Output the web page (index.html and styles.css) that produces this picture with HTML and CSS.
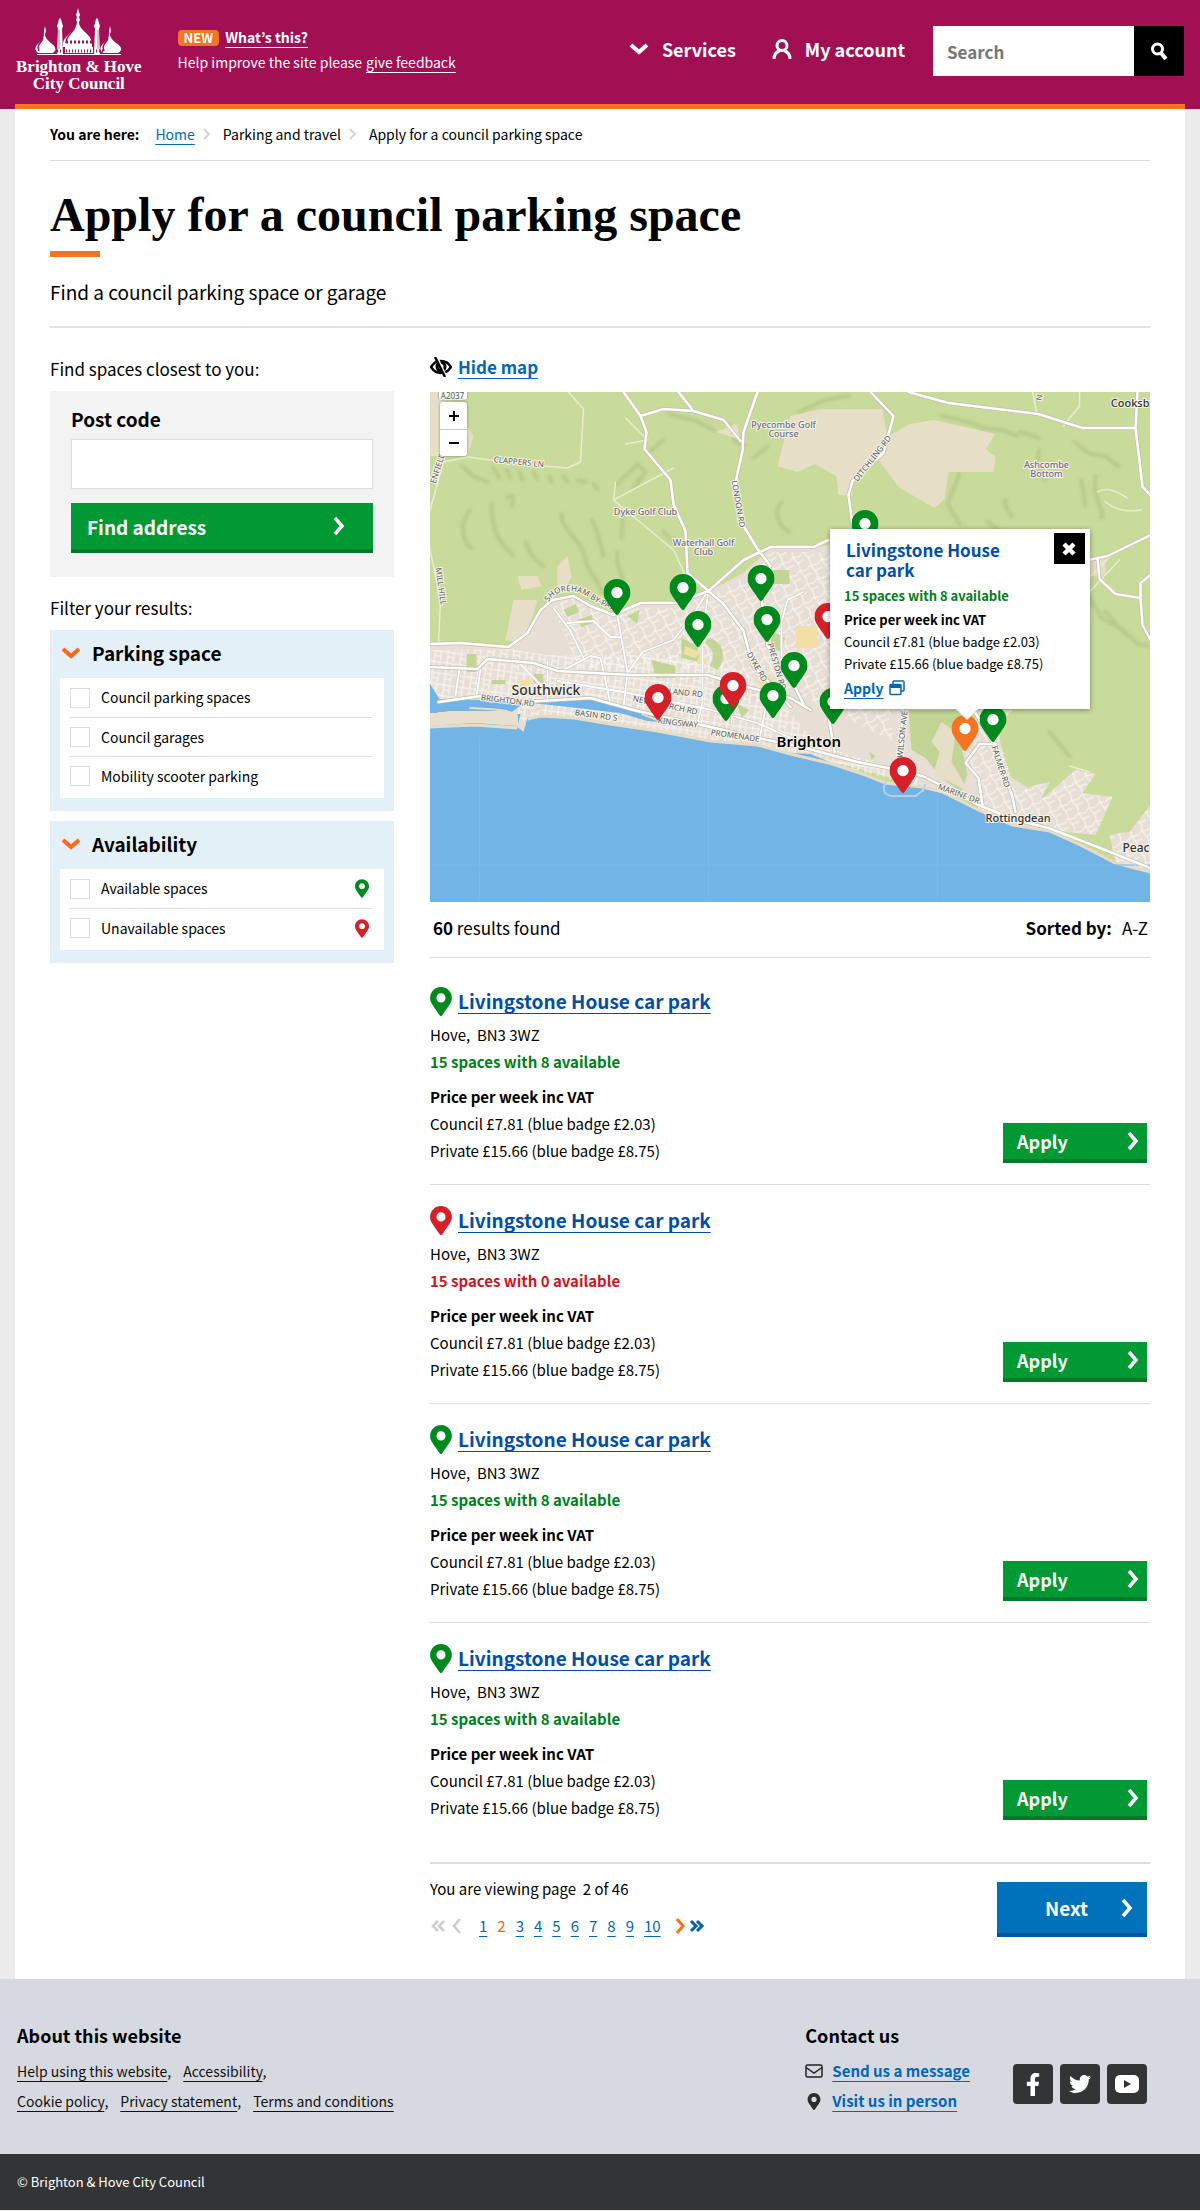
FILE: index.html
```html
<!DOCTYPE html>
<html lang="en">
<head>
<meta charset="utf-8">
<meta name="viewport" content="width=device-width, initial-scale=1">
<title>Apply for a council parking space</title>
<link rel="stylesheet" href="styles.css">
</head>
<body>
<svg class="sprite" aria-hidden="true">
  <symbol id="pin" viewBox="0 0 384 512"><circle cx="192" cy="192" r="100" fill="#fff"/><path fill="currentColor" d="M172.268 501.67C26.97 291.031 0 269.413 0 192 0 85.961 85.961 0 192 0s192 85.961 192 192c0 77.413-26.97 99.031-172.268 309.67-9.535 13.774-29.93 13.773-39.464 0zM192 272c44.183 0 80-35.817 80-80s-35.817-80-80-80-80 35.817-80 80 35.817 80 80 80z"/></symbol>
  <symbol id="next" viewBox="0 0 12 20"><path d="M2 2l7 8-7 8" fill="none" stroke="currentColor" stroke-width="3.5"/></symbol>
  <symbol id="down" viewBox="0 0 20 12"><path d="M2 2l8 7 8-7" fill="none" stroke="currentColor" stroke-width="4"/></symbol>
  <symbol id="crumb" viewBox="0 0 8 12"><path d="M1 1l5 5-5 5" fill="none" stroke="currentColor" stroke-width="2"/></symbol>
</svg>

<header class="site-header">
  <div class="header-row">
    <a class="logo" href="#">
      <svg viewBox="16 8 125 50" width="125" height="50" aria-hidden="true">
        <g fill="#fff">
          <rect x="37" y="54" width="84" height="1"/>
          <path d="M78 8l1 4 1 3-1 2 1 3-1 2c0 5 4 8 8 12 3 3 5 6 5 10v3h-29v-3c0-4 3-7 6-10 4-4 8-7 8-12l-1-2 1-3-1-2 1-3z"/>
          <path d="M65 47h28v6H65z"/>
          <path d="M57 54l1-25-1-3 1-3 1-4 1-1 1 1 1 4 1 3-1 3 1 25zM94 54l1-25-1-3 1-3 1-4 1-1 1 1 1 4 1 3-1 3 1 25z"/>
          <path d="M45 26l1 5-1 3c0 4 3 6 6 9 5 4 6 7 2 10H38c-4-3-3-7 1-10 3-3 5-5 5-9v-3zM110 26l1 5-1 3c0 4 3 6 6 9 7 4 6 8 2 10h-15c-4-3-3-7 1-10 3-3 5-5 5-9v-3z"/>
        </g>
        <g fill="none" stroke="#a21054">
          <path d="M75 27c-2 6-9 8-9 16" stroke-width="1.5"/>
          <path d="M66 42h27" stroke-width="3" stroke-dasharray="2 2"/>
          <path d="M57 51h46" stroke-width="3" stroke-dasharray="1 2"/>
          <path d="M43 38c-1 5-7 6-4 13M108 38c-1 5-7 6-4 13" stroke-width="1.5"/>
          <path d="M59 30v19M98 30v19" stroke-width="0.6"/>
        </g>
      </svg>
      <span>Brighton &amp; Hove</span>
      <span>City Council</span>
    </a>
    <div class="news">
      <p><span class="badge">NEW</span><a href="#"><b>What’s this?</b></a></p>
      <p>Help improve the site please <a href="#">give feedback</a></p>
    </div>
    <nav class="site-nav" aria-label="Main">
      <a href="#"><svg width="20" height="12" aria-hidden="true"><use href="#down"/></svg>Services</a>
      <a href="#"><svg width="20" height="20" viewBox="0 0 20 20" aria-hidden="true"><g fill="none" stroke="#fff" stroke-width="3"><ellipse cx="10" cy="6.500" rx="5" ry="5"/><path d="M2 20c0-5 2-7 6-8.500M18 20c0-5-2-7-6-8.500"/></g></svg>My account</a>
    </nav>
    <form class="search">
      <input type="search" placeholder="Search" aria-label="Search">
      <button type="button" aria-label="Search"><svg width="18" height="18" viewBox="0 0 18 18" aria-hidden="true"><g fill="none" stroke="#fff"><circle cx="7.500" cy="7" r="5" stroke-width="3"/><path d="M11 11l5 6" stroke-width="4"/></g></svg></button>
    </form>
  </div>
  <div class="accent"></div>
</header>

<main class="page">
  <nav class="breadcrumb" aria-label="Breadcrumb">
    <b>You are here:</b>
    <a href="#">Home</a>
    <svg width="8" height="12" aria-hidden="true"><use href="#crumb"/></svg>
    <span>Parking and travel</span>
    <svg width="8" height="12" aria-hidden="true"><use href="#crumb"/></svg>
    <span>Apply for a council parking space</span>
  </nav>
  <div class="title">
    <h1>Apply for a council parking space</h1>
    <p>Find a council parking space or garage</p>
  </div>

  <div class="columns">
    <aside>
      <p class="aside-label">Find spaces closest to you:</p>
      <form class="finder">
        <label for="postcode">Post code</label>
        <input id="postcode" type="text">
        <button type="button" class="btn find">Find address<svg width="12" height="20" aria-hidden="true"><use href="#next"/></svg></button>
      </form>
      <p class="aside-label">Filter your results:</p>
      <section class="filter">
        <h2><svg width="20" height="12" aria-hidden="true"><use href="#down"/></svg>Parking space</h2>
        <div class="options">
          <label><input type="checkbox">Council parking spaces</label>
          <label><input type="checkbox">Council garages</label>
          <label><input type="checkbox">Mobility scooter parking</label>
        </div>
      </section>
      <section class="filter">
        <h2><svg width="20" height="12" aria-hidden="true"><use href="#down"/></svg>Availability</h2>
        <div class="options">
          <label><input type="checkbox">Available spaces<svg class="green" width="14" height="19" aria-hidden="true"><use href="#pin"/></svg></label>
          <label><input type="checkbox">Unavailable spaces<svg class="red" width="14" height="19" aria-hidden="true"><use href="#pin"/></svg></label>
        </div>
      </section>
    </aside>

    <div class="results">
      <a class="hide-map" href="#"><svg width="22" height="20" viewBox="0 0 22 20" aria-hidden="true"><path d="M1 10c5-8 15-8 20 0-5 8-15 8-20 0z" fill="none" stroke="#000" stroke-width="2.500"/><circle cx="11" cy="9.500" r="4" fill="none" stroke="#000" stroke-width="3"/><path d="M7 0l9 19" stroke="#fff" stroke-width="2"/><path d="M5 0l10 20" stroke="#000" stroke-width="2.500"/></svg><span>Hide map</span></a>

      <div class="map">
        <svg class="canvas" viewBox="0 0 721 510" preserveAspectRatio="xMidYMid slice" role="img" aria-label="Map of parking spaces around Brighton">
          <defs>
            <pattern id="streets" width="13" height="11" patternUnits="userSpaceOnUse" patternTransform="rotate(8)"><path d="M0 2h13M3 0v11M9 2v9M3 7h6" stroke="#fbf8f4" stroke-width="1" fill="none"/></pattern>
            <pattern id="streets2" width="12" height="15" patternUnits="userSpaceOnUse" patternTransform="rotate(-28)"><path d="M0 3c4-3 8 3 12 0M4 0c-2 5 3 10 0 15M4 9h8" stroke="#fbf8f4" stroke-width="1" fill="none"/></pattern>
            <filter id="soft" x="-20%" y="-20%" width="140%" height="140%"><feGaussianBlur stdDeviation="1.500"/></filter>
            <path id="bypass" d="M119 210c6-12 24-14 38-6 14 10 24 14 46 18"/>
          </defs>
          <rect width="721" height="510" fill="#c9db9b"/>
          <g fill="none" stroke="#b0c485" stroke-width="4" stroke-linecap="round" opacity="0.700" filter="url(#soft)">
            <path d="M32 74l12 10 14 6M64 76l6 10M77 78l4 8M90 80l3 8M104 80l4 7M120 84l2 6M134 84l4 6M148 88l8 2M164 92l4 5M186 94l22-22 8 8-12 16"/>
            <path d="M40 118c-10 16-8 30 2 38M62 112c0 30 10 40 22 52M78 106c4-6 8-2 4 8M96 150c6 16 12 20 18 24M132 122c0 18 22 26 24 46 2 12 14 20 16 32M162 128c8 12 8 24 12 36M194 118l-2 28M188 160c-2 14 4 22 6 28M220 60l14-12M240 22l24 6 20 10M300 34l6 16 10 4M324 66l14-12M352 110c-8 10-4 24 8 30M234 140l10 10M8 14l12 6"/>
            <path d="M370 20c16-8 26-14 50-16M384 38c22-6 34-10 50-4M512 24l20 4 22 8 18 2 16 6M590 40l20 6M645 50l16 12 14 2 14 10M610 58c-4 14-2 24 6 30M652 88l4 26M666 84c-4 22 10 34 6 42M576 108c-2 8 4 10 6 16M530 82l-12 30 12 20M660 206l12 20 22 12 14 14 12 2M676 220l20 22M558 130l20 14M620 340l20 24"/>
          </g>
          <g fill="#e7dec8">
            <path d="M348 74l13-50 30-7h62l5 28-35 44 0 15-14-1-2-19-22-12-17 8z"/>
            <path d="M458 45l22-13 24-4 62 14-10 15 10 8-2 15h-45l-4 27-10 9-36-21-20-27z"/>
            <path d="M128 174l10-10 4 20-6 14-8-4zM88 184h20l4 10-20 4zM84 208h24l-6 20-14 22-12-2zM0 0h18l10 20 16 24-6 20H0z"/>
            <path d="M656 166h20v18h-20zM480 330l24-2 10 26-6 16 22 22-22-6-20-16zM287 40l20-8 4 16z"/>
          </g>
          <path fill="#e7dfd6" d="M0 252h38l40 3 30-31 13-14 23-8 40 20 24-10h40l31-13 35-18 27-25h43l16-3h20l60 10 60 150v50l30 15 40 25 12 14-50-8-77-14-80-22-45-10-53-4-47-10-50-7-36-2H111l-13 2-10 9-88-1z"/>
          <path fill="url(#streets)" d="M0 258l78-1 40 6h160l60 30 50 60 100 30v12l-110-30-60-8-100-15-100-12-120-8-98 6z"/>
          <path fill="url(#streets2)" d="M122 214l22-8 40 20 24-10h40l31-13 35-18 27-25h43l60 10 20 180-120-60-66-14H150z"/>
          <path fill="#e7dfd6" d="M546 318h37l-13 14v16l16 53 17-7 17-4-10 19 36-31 20 4-13 19 30 4-17 38-48-5-36-6-34-15 4-31-17-12zM680 443l20-3 21-27v66l-35-9z"/>
          <path fill="url(#streets2)" d="M546 318h37l-13 14v16l16 53 17-7 17-4-10 19 36-31 20 4-13 19 30 4-17 38-48-5-36-6-34-15 4-31-17-12zM680 443l20-3 21-27v66l-35-9z"/>
          <g fill="#c2d594">
            <path d="M37 262h10v18H37zM134 218l12-6 4 8-12 5zM148 228l14-5 2 8-12 4zM104 282h10v9h-10zM198 224l12-6-2 14zM252 246l16 8 2 16-18-4zM278 246c16 2 20 20 10 32l-8-4c6-10 4-18-4-22zM222 268l24 6v12h-20zM338 178h22v14h-22zM344 240l12 6-6 14-10-6zM62 288h14v4H62zM308 312l12 6-8 8zM480 400l8 4M440 360l6 4-4 4z"/>
            <path d="M479 318h67v8l-14 30 6 26-6 18-20-14-16-20-14-8z"/>
          </g>
          <path fill="#e7dec8" d="M512 330l14 10-4 30 18 30-36-18 6-22-8-10z"/>
          <g fill="#f0e0a8"><path d="M366 234h22v22h-22zM90 289l10-4 2 12-10 4zM268 266h9v6h-9zM256 254l14 6-4 6-12-4zM326 290l14-8 4 8-12 6zM2 306h8v4H2z"/></g>

          <path fill="#72b4e6" d="M0 334l45-2 43 2 3-12-44-1-25-1-13 0-9 7zM0 291l10 16 41 1 44 2 33-2 33-1 47 11 22 7 14 6-26-2-28-8-60-7-28-3-13 4-8 6-8 10-45-1-16-9-40 0-9-2z"/>
          <path fill="#e9dfce" d="M0 322l20-3h60l8 3 1 12-44-3-45 3z"/>
          <path fill="#72b4e6" d="M0 334l45-2 43 3 6 5 4-14 13-3 34 2 36 6 47 7 53 10 47 4 33 9 20 1-10-4 32 13 33 11 20 8 37 4 20 5 36 18 34 15 37 6 33 15 33 17 35 9v31H0z"/>
          <path d="M0 335l45-2 43 3M98 327l13-3 34 2 36 6 47 7 53 10 47 4 33 9 42 10 33 11 20 8 37 4 20 5 36 18 34 15 37 6 33 15 33 17 35 9" fill="none" stroke="#eadcc3" stroke-width="3"/>
          <path d="M40 316l20 1 18 2M98 319l16-3M212 322l16 6" stroke="#eadcc3" stroke-width="2" fill="none"/>
          <path d="M456 390c-4 10 0 14 8 14M462 404l24 0 8-6M496 392l-3 8" stroke="#b9cfe0" stroke-width="2" fill="none"/>
          <path d="M50 345v165M279 360v150M508 400v110M0 473h721" stroke="#7bb9e8" fill="none"/>

          <g fill="none" stroke-linejoin="round" stroke-linecap="round">
            <g stroke="#e9ecd2" stroke-width="1.500">
              <path d="M139 0l15 17-3 53-13 6-24-2-53-6-23-3-24 5L0 120M0 155l11 53-2 42M186 90l-2 18 60-32M184 108l60 50 14 30M196 26l22 22-22 4M603 0l4 20M650 0v14l-16 20"/>
              <path d="M668 100c10-6 20 0 30 6M676 110c10 8 20 10 36 8M655 190l30-30M660 200l30-32M640 374l20 6"/>
            </g>
            <path stroke="#d3cbc2" stroke-width="3" d="M86 267l32 33v8M118 270v38M188 224l10 57-4 34M198 281l15-21 31-12 20-26 15-24-6 45v68l-5 20M124 216l17 23 13 27M128 281l33-17 10 2 10 46M138 231l26-2 17 16 10 0M51 277l-4 28M30 277l-4 26M128 289l66 11 84 17 50 14 40 18M304 300l-2 30M341 292l-10 50M374 200l-16 8-6 22 0 50"/>
            <path stroke="#fff" stroke-width="1.800" d="M86 267l32 33v8M118 270v38M188 224l10 57-4 34M198 281l15-21 31-12 20-26 15-24-6 45v68l-5 20M124 216l17 23 13 27M128 281l33-17 10 2 10 46M138 231l26-2 17 16 10 0M51 277l-4 28M30 277l-4 26M128 289l66 11 84 17 50 14 40 18M304 300l-2 30M341 292l-10 50M374 200l-16 8-6 22 0 50"/>
            <path stroke="#c4bfae" stroke-width="4" d="M328 0l-14 40-1 19-7 31 8 44 14 23 13 17-10 23 7 57 26 38 10 20M194 0l17 24 6 16-2 17 26 31 3 24 12 27 2 42 21 18 15 13 20 27 9 34 18 19 20 23M211 24l23-7 30 2 30 9 17 21M249 0l15 19M0 252l31-1 48 4 19-14 13-23 12-10 21-4 17 10 23 9 27-12h37l31-12 35-31 27-13h43l15-7M0 275l48 2 10-10 46 4 24 8 73 4h77l43 13 40 10 20 12M9 310l42-6 43 6 67-4 47 13 73 16 47 11 40 8 60 16 41 8 24 6 20 10 36 19 37 15 33 8 44 17 58 23M441 0l23 24-10 37-31 28-4 14 4 30M479 0l40 11 90 11 44 14h53M708 0l-2 36 3 25 4 34 8 8M659 168l19-4 43-21M668 166l2 21 16 15 25 4 2 27 8 15M721 183l-10 8v15M546 321l20 34 17 50 3 15M566 352l-16 0-14 19 13 15 4 27M473 318l-2 47M395 300l10 60"/>
            <path stroke="#fff" stroke-width="2.500" d="M328 0l-14 40-1 19-7 31 8 44 14 23 13 17-10 23 7 57 26 38 10 20M194 0l17 24 6 16-2 17 26 31 3 24 12 27 2 42 21 18 15 13 20 27 9 34 18 19 20 23M211 24l23-7 30 2 30 9 17 21M249 0l15 19M0 252l31-1 48 4 19-14 13-23 12-10 21-4 17 10 23 9 27-12h37l31-12 35-31 27-13h43l15-7M0 275l48 2 10-10 46 4 24 8 73 4h77l43 13 40 10 20 12M9 310l42-6 43 6 67-4 47 13 73 16 47 11 40 8 60 16 41 8 24 6 20 10 36 19 37 15 33 8 44 17 58 23M441 0l23 24-10 37-31 28-4 14 4 30M479 0l40 11 90 11 44 14h53M708 0l-2 36 3 25 4 34 8 8M659 168l19-4 43-21M668 166l2 21 16 15 25 4 2 27 8 15M721 183l-10 8v15M546 321l20 34 17 50 3 15M566 352l-16 0-14 19 13 15 4 27M473 318l-2 47M395 300l10 60"/>
          </g>

          <g class="road">
            <text x="64" y="70" transform="rotate(6 64 70)">CLAPPERS LN</text>
            <text x="302" y="89" transform="rotate(80 302 89)">LONDON RD</text>
            <text x="6" y="176" transform="rotate(82 6 176)">MILL HILL</text>
            <text x="6" y="92" transform="rotate(-72 6 92)">ENFIELD RD</text>
            <text x="51" y="308" transform="rotate(7 51 308)">BRIGHTON RD</text>
            <text x="145" y="323" transform="rotate(8 145 323)">BASIN RD S</text>
            <text x="239" y="302" transform="rotate(5 239 302)">LAND RD</text>
            <text x="203" y="309" transform="rotate(12 203 309)">NEW CHURCH RD</text>
            <text x="228" y="331" transform="rotate(7 228 331)">KINGSWAY</text>
            <text x="281" y="343" transform="rotate(8 281 343)">PROMENADE</text>
            <text x="317" y="262" transform="rotate(60 317 262)">DYKE RD</text>
            <text x="338" y="252" transform="rotate(74 338 252)">PRESTON RD</text>
            <text x="428" y="90" transform="rotate(-52 428 90)">DITCHLING RD</text>
            <text x="473" y="366" transform="rotate(-84 473 366)">WILSON AVE</text>
            <text x="562" y="355" transform="rotate(72 562 355)">FALMER RD</text>
            <text x="508" y="397" transform="rotate(20 508 397)">MARINE DR</text>
            <text><textPath href="#bypass">SHOREHAM BY-PASS</textPath></text>
            <text x="612" y="9" transform="rotate(-80 612 9)">N</text>
          </g>
          <g class="place" text-anchor="middle">
            <text x="354" y="36">Pyecombe Golf</text><text x="354" y="45">Course</text>
            <text x="216" y="123">Dyke Golf Club</text>
            <text x="274" y="154">Waterhall Golf</text><text x="274" y="163">Club</text>
            <text x="617" y="76">Ashcombe</text><text x="617" y="85">Bottom</text>
          </g>
          <g class="town">
            <text x="82" y="303" font-size="14">Southwick</text>
            <text x="556" y="430" font-size="11">Rottingdean</text>
            <text x="720" y="15" font-size="11" text-anchor="end">Cooksb</text>
            <text x="720" y="460" font-size="12" text-anchor="end">Peac</text>
            <text class="city" x="347" y="355" font-size="15">Brighton</text>
          </g>
          <rect x="9" y="-8" width="29" height="16" rx="2" fill="#fff" stroke="#b9b39c"/>
          <text class="road" x="23" y="7" text-anchor="middle">A2037</text>

          <g class="green">
            <use href="#pin" x="174" y="187" width="27" height="36"/><use href="#pin" x="240" y="182" width="27" height="36"/>
            <use href="#pin" x="255" y="219" width="27" height="36"/><use href="#pin" x="318" y="173" width="27" height="36"/>
            <use href="#pin" x="324" y="214" width="27" height="36"/><use href="#pin" x="351" y="260" width="27" height="36"/>
            <use href="#pin" x="330" y="290" width="27" height="36"/><use href="#pin" x="283" y="293" width="27" height="36"/>
            <use href="#pin" x="422" y="118" width="27" height="36"/><use href="#pin" x="390" y="296" width="27" height="36"/>
            <use href="#pin" x="550" y="314" width="27" height="36"/>
          </g>
          <g class="red">
            <use href="#pin" x="290" y="280" width="27" height="36"/><use href="#pin" x="215" y="292" width="27" height="36"/>
            <use href="#pin" x="385" y="211" width="27" height="36"/><use href="#pin" x="460" y="365" width="27" height="36"/>
          </g>
          <g class="orange"><use href="#pin" x="522" y="323" width="27" height="36"/></g>
        </svg>
        <div class="zoom"><button type="button" aria-label="Zoom in"><svg width="12" height="12" aria-hidden="true"><path d="M1 6h10M6 1v10" stroke="#000" stroke-width="2"/></svg></button><button type="button" aria-label="Zoom out"><svg width="12" height="12" aria-hidden="true"><path d="M1 6h10" stroke="#000" stroke-width="2"/></svg></button></div>
        <div class="popup">
          <button type="button" class="close" aria-label="Close"><svg width="14" height="14" viewBox="0 0 14 14" aria-hidden="true"><path d="M2 2l10 10M12 2L2 12" stroke="#fff" stroke-width="4.500"/></svg></button>
          <h2>Livingstone House<br>car park</h2>
          <p class="available">15 spaces with 8 available</p>
          <p class="price"><b>Price per week inc VAT</b></p>
          <p>Council £7.81 (blue badge £2.03)</p>
          <p>Private £15.66 (blue badge £8.75)</p>
          <p class="apply"><a href="#">Apply</a><svg width="16" height="16" viewBox="0 0 16 16" aria-hidden="true"><g fill="none" stroke="#0067b8" stroke-width="1.500"><rect x="1" y="4.500" width="11" height="10" rx="1"/><path d="M4 4V2q0-1 1-1h9q1 0 1 1v8q0 1-1 1h-2"/></g><path d="M1 5h11v3H1z" fill="#0067b8"/></svg></p>
        </div>
      </div>

      <div class="summary"><p><b>60</b> results found</p><p><b>Sorted by:</b><span>A-Z</span></p></div>

      <article class="item">
        <div>
          <h3><svg class="green" width="22" height="29" aria-hidden="true"><use href="#pin"/></svg><a href="#">Livingstone House car park</a></h3>
          <p class="where">Hove,&nbsp; BN3 3WZ</p>
          <p class="available">15 spaces with 8 available</p>
          <p class="price"><b>Price per week inc VAT</b></p>
          <p>Council £7.81 (blue badge £2.03)</p>
          <p>Private £15.66 (blue badge £8.75)</p>
        </div>
        <button type="button" class="btn">Apply<svg width="12" height="20" aria-hidden="true"><use href="#next"/></svg></button>
      </article>
      <article class="item">
        <div>
          <h3><svg class="red" width="22" height="29" aria-hidden="true"><use href="#pin"/></svg><a href="#">Livingstone House car park</a></h3>
          <p class="where">Hove,&nbsp; BN3 3WZ</p>
          <p class="available none">15 spaces with 0 available</p>
          <p class="price"><b>Price per week inc VAT</b></p>
          <p>Council £7.81 (blue badge £2.03)</p>
          <p>Private £15.66 (blue badge £8.75)</p>
        </div>
        <button type="button" class="btn">Apply<svg width="12" height="20" aria-hidden="true"><use href="#next"/></svg></button>
      </article>
      <article class="item">
        <div>
          <h3><svg class="green" width="22" height="29" aria-hidden="true"><use href="#pin"/></svg><a href="#">Livingstone House car park</a></h3>
          <p class="where">Hove,&nbsp; BN3 3WZ</p>
          <p class="available">15 spaces with 8 available</p>
          <p class="price"><b>Price per week inc VAT</b></p>
          <p>Council £7.81 (blue badge £2.03)</p>
          <p>Private £15.66 (blue badge £8.75)</p>
        </div>
        <button type="button" class="btn">Apply<svg width="12" height="20" aria-hidden="true"><use href="#next"/></svg></button>
      </article>
      <article class="item">
        <div>
          <h3><svg class="green" width="22" height="29" aria-hidden="true"><use href="#pin"/></svg><a href="#">Livingstone House car park</a></h3>
          <p class="where">Hove,&nbsp; BN3 3WZ</p>
          <p class="available">15 spaces with 8 available</p>
          <p class="price"><b>Price per week inc VAT</b></p>
          <p>Council £7.81 (blue badge £2.03)</p>
          <p>Private £15.66 (blue badge £8.75)</p>
        </div>
        <button type="button" class="btn">Apply<svg width="12" height="20" aria-hidden="true"><use href="#next"/></svg></button>
      </article>

      <div class="pager">
        <div>
          <p>You are viewing page &nbsp;2 of 46</p>
          <nav class="pages" aria-label="Pages">
            <svg class="muted" width="33" height="16" viewBox="0 0 33 16" aria-hidden="true"><path d="M8 3L3 8l5 5M14 3L9 8l5 5M30 1l-6 7 6 7" fill="none" stroke="currentColor" stroke-width="2.500"/></svg>
            <a href="#">1</a><span>2</span><a href="#">3</a><a href="#">4</a><a href="#">5</a><a href="#">6</a><a href="#">7</a><a href="#">8</a><a href="#">9</a><a href="#">10</a>
            <svg width="30" height="16" viewBox="0 0 30 16" aria-hidden="true"><path d="M2 1l6 7-6 7" fill="none" stroke="#f4741f" stroke-width="3"/><path d="M16 3l5 5-5 5M22 3l5 5-5 5" fill="none" stroke="#0062b0" stroke-width="3"/></svg>
          </nav>
        </div>
        <button type="button" class="btn next">Next<svg width="12" height="20" aria-hidden="true"><use href="#next"/></svg></button>
      </div>
    </div>
  </div>
</main>

<footer>
  <div class="footer-main">
    <div class="about">
      <h2>About this website</h2>
      <p><a href="#">Help using this website</a>,<a href="#">Accessibility</a>,</p>
      <p><a href="#">Cookie policy</a>,<a href="#">Privacy statement</a>,<a href="#">Terms and conditions</a></p>
    </div>
    <div class="contact">
      <h2>Contact us</h2>
      <p><svg width="18" height="14" viewBox="0 0 18 14" aria-hidden="true"><g fill="none" stroke="#222" stroke-width="1.500"><rect x="1" y="1" width="16" height="12" rx="1.500"/><path d="M1 3.500l8 5.500 8-5.500"/></g></svg><a href="#">Send us a message</a></p>
      <p><svg width="18" height="17" viewBox="-75 0 534 512" aria-hidden="true"><path fill="#2b2c2e" d="M172 502C27 291 0 269 0 192 0 86 86 0 192 0s192 86 192 192c0 77-27 99-172 310-10 13-30 13-40 0zM192 272c44 0 80-36 80-80s-36-80-80-80-80 36-80 80 36 80 80 80z"/></svg><a href="#">Visit us in person</a></p>
    </div>
    <div class="social">
      <a href="#" aria-label="Facebook"><svg width="16" height="23" viewBox="0 0 320 512"><path fill="#fff" d="M279.14 288l14.22-92.66h-88.91v-60.13c0-25.35 12.42-50.06 52.24-50.06h40.42V6.26S260.43 0 225.36 0c-73.22 0-121.08 44.38-121.08 124.72v70.62H22.89V288h81.39v224h100.17V288z"/></svg></a>
      <a href="#" aria-label="Twitter"><svg width="22" height="22" viewBox="0 0 512 512"><path fill="#fff" d="M459.37 151.716c.325 4.548.325 9.097.325 13.645 0 138.72-105.583 298.558-298.558 298.558-59.452 0-114.68-17.219-161.137-47.106 8.447.974 16.568 1.299 25.34 1.299 49.055 0 94.213-16.568 130.274-44.832-46.132-.975-84.792-31.188-98.112-72.772 6.498.974 12.995 1.624 19.818 1.624 9.421 0 18.843-1.3 27.614-3.573-48.081-9.747-84.143-51.98-84.143-102.985v-1.299c13.969 7.797 30.214 12.67 47.431 13.319-28.264-18.843-46.781-51.005-46.781-87.391 0-19.492 5.197-37.36 14.294-52.954 51.655 63.675 129.3 105.258 216.365 109.807-1.624-7.797-2.599-15.918-2.599-24.04 0-57.828 46.782-104.934 104.934-104.934 30.213 0 57.502 12.67 76.67 33.137 23.715-4.548 46.456-13.32 66.599-25.34-7.798 24.366-24.366 44.833-46.132 57.827 21.117-2.273 41.584-8.122 60.426-16.243-14.292 20.791-32.161 39.308-52.628 54.253z"/></svg></a>
      <a href="#" aria-label="YouTube"><svg width="24" height="18" viewBox="0 0 24 18"><rect width="24" height="18" rx="5" fill="#fff"/><path d="M9 5l7 4-7 4z" fill="#333436"/></svg></a>
    </div>
  </div>
  <div class="footer-base">© Brighton &amp; Hove City Council</div>
</footer>
</body>
</html>
```
FILE: styles.css
```css
* { box-sizing: border-box; }

body {
  margin: 0;
  background: #ececec;
  color: #000;
  font: 15px/27px "Noto Sans CJK KR", "Noto Sans", sans-serif;
}

h1, h2, h3, p { margin: 0; }
input, button { font: inherit; }
svg { flex: none; }
.sprite { position: absolute; width: 0; height: 0; }

a {
  color: #0067b8;
  text-decoration-thickness: 1px;
  text-underline-offset: 4px;
  text-decoration-skip-ink: none;
}

.green { color: #00891d; }
.red { color: #d5202a; }
.orange { color: #f4741f; }

/* Header */
.site-header { background: #a21054; color: #fff; }
.site-header a { color: #fff; }
.header-row {
  display: flex;
  align-items: flex-start;
  padding: 8px 16px 12px;
}
.accent { height: 5px; margin: 0 15px; background: #f4741f; }

.logo {
  display: flex;
  flex-direction: column;
  align-items: center;
  font: bold 17px/17px "Liberation Serif", serif;
  text-decoration: none;
}

.news { padding: 17px 0 0 36px; font-size: 14px; line-height: 25px; }
.news p { display: flex; gap: 4px; }
.badge {
  align-self: center;
  margin-right: 2px;
  padding: 0 6px;
  border-radius: 4px;
  background: #f4741f;
  font-size: 13px;
  font-weight: bold;
  line-height: 16px;
}

.site-nav {
  display: flex;
  gap: 36px;
  margin-left: auto;
  padding: 28px 28px 0 0;
}
.site-nav a {
  display: flex;
  align-items: center;
  gap: 13px;
  font-size: 18px;
  font-weight: bold;
  line-height: 26px;
  text-decoration: none;
}

.search { display: flex; margin-top: 18px; height: 50px; }
.search input {
  width: 201px;
  padding: 0 14px;
  border: 0;
  border-radius: 0;
  background: #fff;
  font-size: 17px;
  font-weight: bold;
}
.search input::placeholder { color: #767676; opacity: 1; }
.search button { width: 50px; padding: 0; border: 0; background: #000; }
.search button svg { display: block; margin: 0 auto; }

/* Page head */
.page { margin: 0 15px; padding: 0 35px 40px; background: #fff; }

.breadcrumb {
  display: flex;
  align-items: center;
  padding: 13px 0 14px;
  border-bottom: 1px solid #ddd;
  font-size: 14px;
  line-height: 24px;
}
.breadcrumb a { margin-left: 16px; }
.breadcrumb svg { margin: 0 12px 0 8px; color: #d4d4d4; }

.title { padding-bottom: 20px; border-bottom: 2px solid #e2e2e2; }
h1 {
  padding-top: 26px;
  font: bold 48px/56px "Liberation Serif", serif;
}
h1::after {
  content: "";
  display: block;
  width: 50px;
  height: 6px;
  margin: 8px 0 21px;
  background: #f4741f;
}
.title p { font-size: 19px; line-height: 28px; }

.columns { display: grid; grid-template-columns: 344px minmax(0, 1fr); gap: 36px; }

/* Sidebar */
aside { padding-top: 28px; }
.aside-label { margin-bottom: 9px; font-size: 17px; line-height: 26px; }
.finder {
  display: flex;
  flex-direction: column;
  margin-bottom: 18px;
  padding: 14px 21px 24px;
  background: #f3f3f3;
}
.finder label { font-size: 19px; font-weight: bold; line-height: 28px; }
.finder input {
  height: 50px;
  margin: 6px 0 14px;
  padding: 0 12px;
  border: 1px solid #ddd;
  background: #fff;
}

.btn {
  display: flex;
  align-items: center;
  justify-content: space-between;
  width: 144px;
  height: 40px;
  padding: 0 8px 0 14px;
  border: 0;
  border-bottom: 4px solid #007a28;
  background: #009933;
  color: #fff;
  font-size: 18px;
  font-weight: bold;
}
.btn.find { width: auto; height: 50px; padding: 0 28px 0 16px; font-size: 19px; }
.btn.next {
  gap: 33px;
  justify-content: flex-end;
  width: 150px;
  height: 55px;
  padding-right: 14px;
  border-color: #00569a;
  background: #0072bc;
  font-size: 19px;
}

.filter { margin-bottom: 10px; padding: 9px 10px 13px; background: #e3f0f8; }
.filter h2 {
  display: flex;
  align-items: center;
  gap: 11px;
  padding-bottom: 11px;
  font-size: 19px;
  line-height: 28px;
}
.filter h2 svg { margin-left: 1px; color: #ff6a1a; }
.options { padding: 0 12px 3px 10px; background: #fff; }
.options label {
  display: flex;
  align-items: center;
  gap: 11px;
  height: 39px;
  font-size: 14px;
}
.options label + label { border-top: 1px solid #ddd; }
.options label svg { margin: 0 3px 0 auto; }
.options input {
  appearance: none;
  width: 20px;
  height: 20px;
  margin: 0;
  border: 1px solid #ddd;
  background: #fff;
}

/* Map */
.results { padding-top: 26px; }
.hide-map {
  display: flex;
  align-items: center;
  gap: 6px;
  margin-bottom: 12px;
  font-size: 17px;
  font-weight: bold;
  line-height: 26px;
}
.map { position: relative; }
.canvas { display: block; width: 100%; height: 510px; }
.canvas text { font-family: "Noto Sans", sans-serif; paint-order: stroke; stroke: #f6f4ea; stroke-width: 2px; }
.road { font-size: 8px; fill: #55585a; }
.place { font-size: 9px; fill: #6d6c80; font-weight: 500; }
.town { fill: #333; font-weight: 500; }
.city { fill: #000; font-weight: 600; }

.zoom {
  position: absolute;
  top: 10px;
  left: 10px;
  width: 27px;
  border-radius: 3px;
  background: #fff;
  box-shadow: 0 0 3px #0006;
}
.zoom button { display: block; width: 27px; height: 27px; padding: 7px; border: 0; background: none; }
.zoom button + button { border-top: 1px solid #ccc; }
.zoom svg { display: block; margin: auto; }

.popup {
  position: absolute;
  top: 137px;
  left: 400px;
  width: 260px;
  height: 180px;
  padding: 11px 14px;
  background: #fff;
  box-shadow: 0 1px 5px #0006;
  font-size: 13px;
  line-height: 22px;
}
.popup::after {
  content: "";
  position: absolute;
  top: 180px;
  left: 126px;
  border: 11px solid transparent;
  border-top-color: #fff;
  border-bottom: 0;
}
.popup h2 { margin: 0 0 5px 2px; color: #004ea8; font-size: 17px; line-height: 20px; }
.popup .price { margin-top: 2px; }
.apply { display: flex; align-items: center; gap: 6px; padding-top: 2px; font-size: 14px; font-weight: bold; }
.close {
  position: absolute;
  top: 4px;
  right: 5px;
  width: 31px;
  height: 31px;
  padding: 8px;
  border: 0;
  background: #000;
}
.close svg { display: block; }

/* Results */
.summary {
  display: flex;
  justify-content: space-between;
  padding: 13px 2px 16px 3px;
  border-bottom: 1px solid #ddd;
  font-size: 17px;
  line-height: 26px;
}
.summary span { margin-left: 10px; }

.item {
  display: flex;
  justify-content: space-between;
  align-items: flex-end;
  padding: 20px 3px 20px 0;
  border-bottom: 1px solid #ddd;
}
.item .btn { margin-bottom: 1px; }
.summary + .item { padding-top: 28px; }
.item h3 {
  display: flex;
  align-items: center;
  gap: 6px;
  margin-bottom: 5px;
  font-size: 19px;
  line-height: 30px;
}
.item h3 a { color: #004ea8; }
.available { color: #00801a; font-weight: bold; }
.none { color: #d0141c; }
.item .price { margin-top: 8px; }
.item:nth-last-child(2) { padding-bottom: 41px; border-bottom: 2px solid #ddd; }

.pager { display: flex; justify-content: space-between; padding-right: 3px; }
.pager p { padding: 11px 0 10px; }
.pager .btn { margin-top: 18px; }
.pages { display: flex; align-items: center; gap: 10px; line-height: 27px; }
.pages span { color: #f4601a; }
.pages svg:first-child { margin-right: 6px; }
.pages svg:last-child { margin-left: 4px; }
.muted { color: #ccc; }

/* Footer */
.footer-main {
  display: flex;
  align-items: flex-start;
  padding: 42px 53px 38px 17px;
  background: #d6dae0;
  font-size: 14px;
  line-height: 30px;
}
footer h2 { margin-bottom: 7px; font-size: 18px; line-height: 28px; }
.about { flex: 1; }
.about a { color: #111; }
.about a + a { margin-left: 12px; }
.contact p { display: flex; align-items: center; gap: 9px; font-size: 15px; font-weight: bold; }
.social { display: flex; gap: 7px; margin: 43px 0 0 43px; }
.social a {
  display: grid;
  place-items: center;
  width: 40px;
  height: 40px;
  border-radius: 4px;
  background: #333436;
}
.footer-base {
  padding: 16px 17px;
  background: #333436;
  color: #fff;
  font-size: 13px;
  line-height: 24px;
}
```
